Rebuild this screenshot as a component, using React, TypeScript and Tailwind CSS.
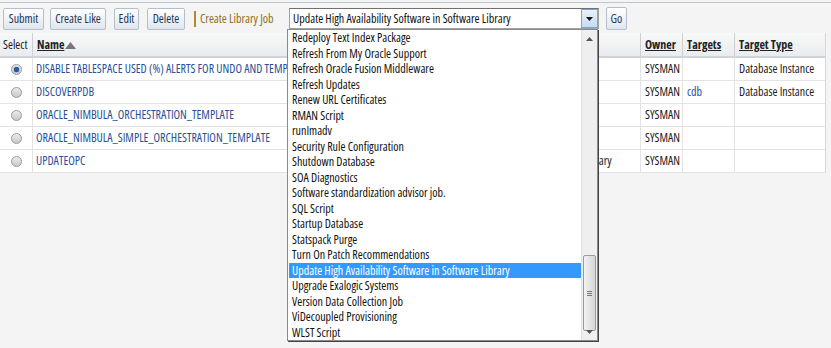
import React from "react";

const items = [
  "Redeploy Text Index Package",
  "Refresh From My Oracle Support",
  "Refresh Oracle Fusion Middleware",
  "Refresh Updates",
  "Renew URL Certificates",
  "RMAN Script",
  "runImadv",
  "Security Rule Configuration",
  "Shutdown Database",
  "SOA Diagnostics",
  "Software standardization advisor job.",
  "SQL Script",
  "Startup Database",
  "Statspack Purge",
  "Turn On Patch Recommendations",
  "Update High Availability Software in Software Library",
  "Upgrade Exalogic Systems",
  "Version Data Collection Job",
  "ViDecoupled Provisioning",
  "WLST Script",
];

const rows = [
  { name: "DISABLE TABLESPACE USED (%) ALERTS FOR UNDO AND TEMP", type: "", owner: "SYSMAN", targets: "", tt: "Database Instance", sel: true },
  { name: "DISCOVERPDB", type: "", owner: "SYSMAN", targets: "cdb", tt: "Database Instance", sel: false },
  { name: "ORACLE_NIMBULA_ORCHESTRATION_TEMPLATE", type: "", owner: "SYSMAN", targets: "", tt: "", sel: false },
  { name: "ORACLE_NIMBULA_SIMPLE_ORCHESTRATION_TEMPLATE", type: "", owner: "SYSMAN", targets: "", tt: "", sel: false },
  { name: "UPDATEOPC", type: "Update High Availability Software in Software Library", owner: "SYSMAN", targets: "", tt: "", sel: false },
];

function Btn({ children, w, h = "h-[22px]" }: { children: React.ReactNode; w: string; h?: string }) {
  return (
    <div className={`${w} ${h} shrink-0 whitespace-nowrap flex items-center justify-center border border-[#b3bfcc] rounded-[2px] bg-gradient-to-b from-[#ffffff] to-[#dfe6ee] text-[#1d3557]`}>
      {children}
    </div>
  );
}

function Radio({ on }: { on: boolean }) {
  return (
    <div className="w-[11px] h-[11px] rounded-full border border-[#9a9a9a] bg-gradient-to-b from-[#ececec] to-[#c8c8c8] flex items-center justify-center">
      {on && <div className="w-[5px] h-[5px] rounded-full bg-[#1f5fa8] shadow-[0_0_1px_#0a3a70]" />}
    </div>
  );
}

export default function App() {
  return (
    <div className="relative w-[831px] h-[348px] overflow-hidden bg-[#f4f4f4] font-['Open_Sans',sans-serif] [font-stretch:85%] text-[12px] text-[#222] whitespace-nowrap">
      <div className="h-[2px]" />
      <div className="h-[1px] bg-[#b9c6d3]" />
      {/* toolbar */}
      <div className="flex items-center h-[23px] mt-[4px] pl-[3px]">
        <Btn w="w-[41px]">Submit</Btn>
        <div className="w-[6px] shrink-0" />
        <Btn w="w-[56px]">Create Like</Btn>
        <div className="w-[8px] shrink-0" />
        <Btn w="w-[25px]">Edit</Btn>
        <div className="w-[8px] shrink-0" />
        <Btn w="w-[38px]">Delete</Btn>
        <div className="w-[9px] shrink-0" />
        <div className="w-[2px] h-[16px] bg-[#b08a2e] shrink-0" />
        <div className="ml-[4px] text-[#8d6e1f] w-[89px] shrink-0">Create Library Job</div>
        <div className="relative shrink-0 w-[310px] h-[21px] bg-white border border-[#a0a0a0] border-t-[#707070] flex items-center pl-[3px]">
          <span className="text-[#111]">Update High Availability Software in Software Library</span>
          <div className="absolute right-0 top-0 w-[17px] h-[19px] border border-[#7ea6cf] bg-gradient-to-b from-[#e8f2fb] to-[#c4dcf2] flex items-center justify-center">
            <svg width="7" height="4" viewBox="0 0 7 4"><path d="M0 0H7L3.5 4Z" fill="#111" /></svg>
          </div>
        </div>
        <div className="w-[7px] shrink-0" />
        <Btn w="w-[21px]" h="h-[23px]">Go</Btn>
      </div>
      {/* table */}
      <div className="mt-[3px] w-[826px] border-r border-[#d8d8d8] bg-white">
        <div className="flex h-[25px] bg-gradient-to-b from-[#f8f8f8] to-[#e9ecef] border-b-2 border-[#cfd4da] font-bold">
          <div className="w-[33px] flex items-center pl-[3px] border-r border-[#cfcfcf] font-normal">Select</div>
          <div className="w-[357px] flex items-center pl-[4px] border-r border-[#cfcfcf]">
            <span className="underline">Name</span>
            <svg width="11" height="7" viewBox="0 0 11 7" className="ml-[1px] mt-[2px]"><path d="M0 7H11L5.5 0Z" fill="#777" /></svg>
          </div>
          <div className="w-[251px] flex items-center pl-[4px] border-r border-[#cfcfcf]" />
          <div className="w-[42px] flex items-center pl-[4px] border-r border-[#cfcfcf]"><span className="underline">Owner</span></div>
          <div className="w-[52px] flex items-center pl-[4px] border-r border-[#cfcfcf]"><span className="underline">Targets</span></div>
          <div className="flex-1 flex items-center pl-[4px]"><span className="underline">Target Type</span></div>
        </div>
        {rows.map((r, i) => (
          <div key={i} className="flex h-[23px] border-b border-[#e3e3e3]">
            <div className="w-[33px] flex items-center justify-center border-r border-[#e3e3e3]"><Radio on={r.sel} /></div>
            <div className="w-[357px] flex items-center pl-[3px] border-r border-[#e3e3e3] text-[#2a4f9a]">{r.name}</div>
            <div className="w-[251px] flex items-center pl-[4px] border-r border-[#e3e3e3]">{r.type}</div>
            <div className="w-[42px] flex items-center pl-[4px] border-r border-[#e3e3e3]">{r.owner}</div>
            <div className="w-[52px] flex items-center pl-[4px] border-r border-[#e3e3e3] text-[#2a4f9a]">{r.targets}</div>
            <div className="flex-1 flex items-center pl-[4px]">{r.tt}</div>
          </div>
        ))}
      </div>
      {/* dropdown list */}
      <div className="absolute left-[287px] top-[29px] w-[311px] h-[312px] bg-white border border-[#8a8a8a] shadow-[1px_1px_0_#444] flex">
        <div className="flex-1 pl-[1px]">
          {items.map((it, i) => (
            <div key={i} className={`h-[15.5px] leading-[15.5px] pl-[3px] ${i === 15 ? "bg-[#3399ff] text-white" : "text-[#111]"}`}>{it}</div>
          ))}
        </div>
        <div className="w-[16px] bg-[#efefef] border-l border-[#e2e2e2] flex flex-col items-center relative">
          <svg width="7" height="4" viewBox="0 0 7 4" className="mt-[7px]"><path d="M0 4H7L3.5 0Z" fill="#555" /></svg>
          <div className="absolute left-[1px] top-[225px] w-[13px] h-[76px] rounded-[2px] border border-[#9a9a9a] bg-gradient-to-r from-[#f2f2f2] to-[#d6d6d6] flex items-center justify-center">
            <div className="flex flex-col gap-[1px]">
              <div className="w-[5px] h-[1px] bg-[#777]" />
              <div className="w-[5px] h-[1px] bg-[#777]" />
              <div className="w-[5px] h-[1px] bg-[#777]" />
            </div>
          </div>
          <svg width="7" height="4" viewBox="0 0 7 4" className="absolute bottom-[6px]"><path d="M0 0H7L3.5 4Z" fill="#555" /></svg>
        </div>
      </div>
    </div>
  );
}
